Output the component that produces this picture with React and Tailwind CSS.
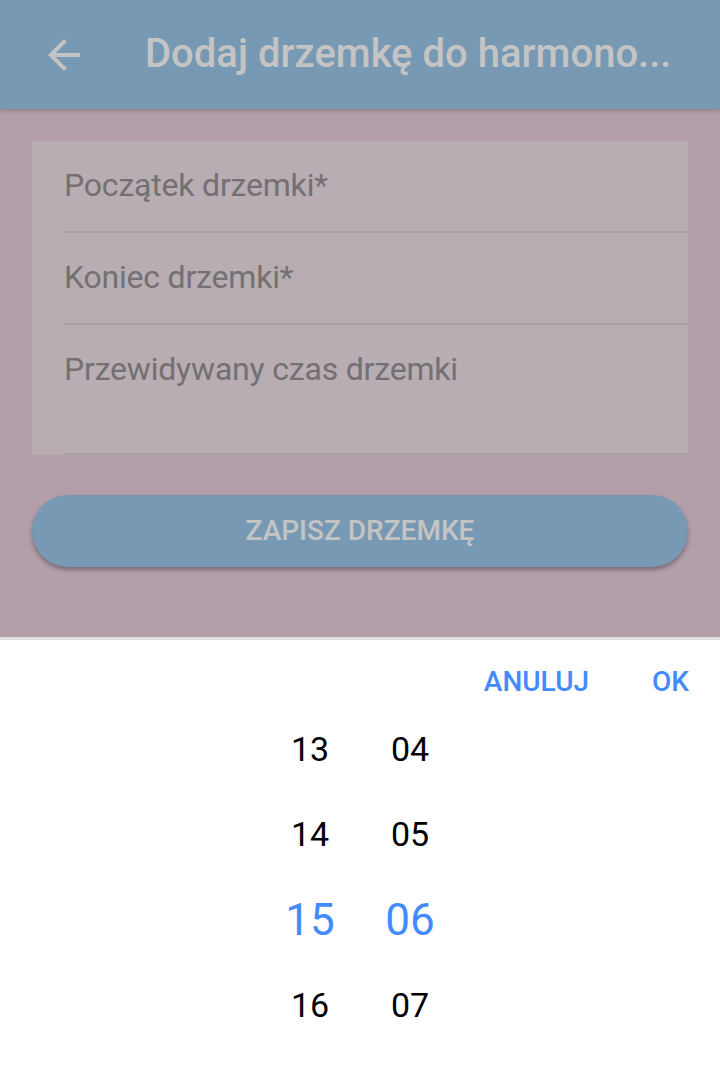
import React from 'react';

const hours = ['13', '14', '15', '16'];
const minutes = ['04', '05', '06', '07'];

const Field = ({ label, tall }) => (
  <div className="pl-8">
    <div className={`border-b-2 border-[#a4a2a4] pt-[25px] ${tall ? 'h-[130px]' : 'h-[92px]'}`}>
      <span className="block text-[32px] leading-[38px] tracking-[-0.2px] text-[#737073]">{label}</span>
    </div>
  </div>
);

const App = () => {
  return (
    <div className="w-[720px] h-[1077px] flex flex-col overflow-hidden font-['Roboto',sans-serif]">
      {/* pasek tytułu */}
      <header className="relative z-10 h-[109px] shrink-0 bg-[#7899b3] shadow-[0_2px_4px_rgba(0,0,0,0.2)] flex items-center">
        <div className="ml-10 w-12 h-12 flex items-center justify-center">
          <svg width="48" height="48" viewBox="0 0 24 24" fill="#c4c4c4">
            <path d="M20 11H7.83l5.59-5.59L12 4l-8 8 8 8 1.41-1.41L7.83 13H20v-2z" />
          </svg>
        </div>
        <h1 className="ml-[57px] -mt-[2px] text-[40px] leading-[46px] font-medium text-[#c4c4c4] whitespace-nowrap">
          Dodaj drzemkę do harmono...
        </h1>
      </header>

      {/* formularz */}
      <main className="h-[528px] shrink-0 bg-[#b39fa9] px-8 pt-8">
        <section className="bg-[#b7adb2]">
          <Field label="Początek drzemki*" />
          <Field label="Koniec drzemki*" />
          <Field label="Przewidywany czas drzemki" tall />
        </section>
        <button className="mt-[40px] w-full h-[72px] rounded-full bg-[#7899b3] shadow-[0_3px_4px_rgba(60,40,60,0.45)] text-[28px] font-medium text-[#c4c4c4]">
          ZAPISZ DRZEMKĘ
        </button>
      </main>

      {/* wybór godziny */}
      <section className="flex-1 bg-white border-t-[3px] border-[#e2e2e2]">
        <div className="flex justify-end gap-[63px] pr-[31px] pt-[26px]">
          <span className="text-[28px] leading-[32px] font-medium text-[#448aff]">ANULUJ</span>
          <span className="text-[28px] leading-[32px] font-medium text-[#448aff]">OK</span>
        </div>
        <div className="mt-[8px] flex pl-[260px]">
          {[hours, minutes].map((col, ci) => (
            <div key={ci} className="w-[100px] flex flex-col">
              {col.map((v, i) => (
                <div key={v} className="h-[85.5px] flex items-center justify-center">
                  {i === 2 ? (
                    <span className="text-[44px] leading-[44px] text-[#448aff]">{v}</span>
                  ) : (
                    <span className="text-[34px] leading-[34px] text-black">{v}</span>
                  )}
                </div>
              ))}
            </div>
          ))}
        </div>
      </section>
    </div>
  );
};

export default App;
